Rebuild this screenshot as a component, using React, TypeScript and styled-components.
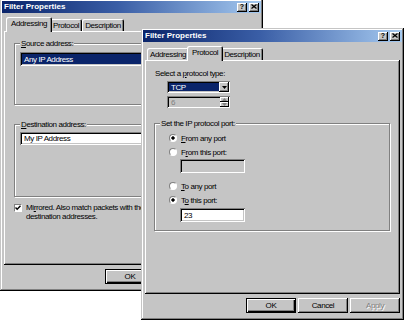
import React from "react";
import styled, { createGlobalStyle } from "styled-components";

const GRAY = "#c5c5c5";
const DARK = "#808080";
const NAVY = "#0a246a";

const GlobalStyle = createGlobalStyle`
  html, body { margin: 0; padding: 0; background: #fff; }
  body {
    font-family: "Liberation Sans", Arial, sans-serif;
    font-size: 8px;
    letter-spacing: -0.4px;
    color: #000;
  }
  * { box-sizing: border-box; }
  u { text-decoration-thickness: 1px; text-underline-offset: 1px; }
`;

const Desktop = styled.div`
  position: relative;
  width: 404px;
  height: 321px;
  overflow: hidden;
  background: #fff;
`;

const Window = styled.div<{ $x: number; $y: number }>`
  position: absolute;
  left: ${(p) => p.$x}px;
  top: ${(p) => p.$y}px;
  width: 263px;
  height: 292px;
  padding: 2px;
  display: flex;
  flex-direction: column;
  background: ${GRAY};
  box-shadow: inset -1px -1px #000, inset 1px 1px ${GRAY}, inset -2px -2px ${DARK},
    inset 2px 2px #fff;
`;

const TitleBar = styled.div`
  flex: none;
  height: 12px;
  display: flex;
  align-items: center;
  justify-content: space-between;
  padding: 0 2px;
  background: linear-gradient(to right, ${NAVY} 0%, #3a5ea6 45%, #a6caf0 100%);
`;

const TitleText = styled.span`
  color: #fff;
  font-weight: bold;
  font-size: 8px;
  letter-spacing: 0;
  line-height: 12px;
  white-space: nowrap;
`;

const TitleButtons = styled.div`
  display: flex;
  gap: 2px;
`;

const TitleButton = styled.div`
  width: 10px;
  height: 9px;
  display: flex;
  align-items: center;
  justify-content: center;
  background: ${GRAY};
  box-shadow: inset -1px -1px #000, inset 1px 1px #fff, inset -2px -2px ${DARK};
  font-size: 7px;
  font-weight: bold;
  letter-spacing: 0;
  line-height: 9px;
  padding-bottom: 1px;
`;

const Body = styled.div`
  flex: 1;
  display: flex;
  flex-direction: column;
  padding: 4px 2px 0 2px;
`;

const TabRow = styled.div`
  position: relative;
  z-index: 1;
  display: flex;
  align-items: flex-end;
  height: 14px;
  padding-left: 2px;
`;

const Tab = styled.div<{ $active?: boolean }>`
  position: relative;
  z-index: ${(p) => (p.$active ? 2 : 1)};
  flex: none;
  height: ${(p) => (p.$active ? 15 : 12)}px;
  margin: 0 ${(p) => (p.$active ? -2 : 0)}px ${(p) => (p.$active ? -1 : 0)}px;
  padding: 0 ${(p) => (p.$active ? 5 : 3)}px ${(p) => (p.$active ? 2 : 0)}px;
  display: flex;
  align-items: center;
  white-space: nowrap;
  background: ${GRAY};
  border-radius: 2px 2px 0 0;
  box-shadow: inset 1px 1px #fff, inset -1px 0 #000, inset -2px 0 ${DARK};
  &:first-child {
    margin-left: 0;
  }
`;

const Panel = styled.div`
  flex: none;
  height: 234px;
  display: flex;
  flex-direction: column;
  box-shadow: inset -1px -1px #000, inset 1px 1px #fff, inset -2px -2px ${DARK};
`;

const GroupBox = styled.div<{ $mt: number; $h: number; $ml: number }>`
  position: relative;
  flex: none;
  height: ${(p) => p.$h}px;
  margin: ${(p) => p.$mt}px 10px 0 ${(p) => p.$ml}px;
  display: flex;
  flex-direction: column;
  border: 1px solid ${DARK};
  box-shadow: inset 1px 1px #fff, 1px 1px #fff;
`;

const GroupLabel = styled.span`
  position: absolute;
  top: -5px;
  left: 5px;
  padding: 0 1px;
  line-height: 9px;
  background: ${GRAY};
  white-space: nowrap;
`;

const Field = styled.div<{
  $mt: number;
  $ml: number;
  $w?: number;
  $h: number;
  $disabled?: boolean;
}>`
  flex: none;
  display: flex;
  align-items: center;
  width: ${(p) => (p.$w ? `${p.$w}px` : "auto")};
  height: ${(p) => p.$h}px;
  margin: ${(p) => p.$mt}px 6px 0 ${(p) => p.$ml}px;
  padding: 2px;
  background: ${(p) => (p.$disabled ? GRAY : "#fff")};
  color: ${(p) => (p.$disabled ? DARK : "#000")};
  box-shadow: inset 1px 1px ${DARK}, inset -1px -1px #fff, inset 2px 2px #000,
    inset -2px -2px ${GRAY};
  white-space: nowrap;
`;

const FieldText = styled.span`
  flex: 1;
  padding-left: 2px;
  line-height: 9px;
`;

const Selection = styled.span`
  flex: 1;
  align-self: stretch;
  display: flex;
  align-items: center;
  padding-left: 2px;
  background: ${NAVY};
  color: #fff;
`;

const DropButton = styled.div`
  flex: none;
  width: 10px;
  align-self: stretch;
  margin: -1px -1px -1px 0;
  display: flex;
  align-items: center;
  justify-content: center;
  background: ${GRAY};
  box-shadow: inset -1px -1px #000, inset 1px 1px #fff, inset -2px -2px ${DARK};
`;

const SpinColumn = styled.div`
  flex: none;
  width: 9px;
  align-self: stretch;
  margin: -1px -1px -1px 0;
  display: flex;
  flex-direction: column;
`;

const SpinButton = styled.div`
  flex: 1;
  display: flex;
  align-items: center;
  justify-content: center;
  background: ${GRAY};
  box-shadow: inset -1px -1px #000, inset 1px 1px #fff;
`;

const Prompt = styled.div`
  margin: 9px 0 0 10px;
  line-height: 9px;
  white-space: nowrap;
`;

const RadioRow = styled.div<{ $mt: number }>`
  flex: none;
  display: flex;
  align-items: center;
  gap: 4px;
  height: 10px;
  margin-top: ${(p) => p.$mt}px;
  padding-left: 14px;
  white-space: nowrap;
`;

const RadioDot = styled.span<{ $checked?: boolean }>`
  flex: none;
  width: 8px;
  height: 8px;
  border-radius: 50%;
  border: 1px solid;
  border-color: ${DARK} #fff #fff ${DARK};
  background: ${(p) =>
    p.$checked
      ? "radial-gradient(circle, #000 0 1.4px, #fff 1.9px)"
      : "#fff"};
`;

const CheckRow = styled.div`
  display: flex;
  align-items: flex-start;
  gap: 4px;
  margin: 6px 0 0 10px;
`;

const CheckBox = styled.span`
  flex: none;
  width: 8px;
  height: 8px;
  margin-top: 1px;
  display: flex;
  align-items: center;
  justify-content: center;
  background: #fff;
  border: 1px solid;
  border-color: ${DARK} #fff #fff ${DARK};
`;

const CheckText = styled.div`
  line-height: 9px;
  white-space: nowrap;
`;

const ButtonRow = styled.div`
  display: flex;
  justify-content: flex-end;
  gap: 2px;
  margin-top: 4px;
`;

const DialogButton = styled.div<{ $default?: boolean; $disabled?: boolean }>`
  width: 50px;
  height: 15px;
  display: flex;
  align-items: center;
  justify-content: center;
  background: ${GRAY};
  color: ${(p) => (p.$disabled ? DARK : "#000")};
  text-shadow: ${(p) => (p.$disabled ? "1px 1px #fff" : "none")};
  box-shadow: ${(p) =>
    p.$default
      ? `inset 0 0 0 1px #000, inset 2px 2px #fff, inset -2px -2px #000, inset -3px -3px ${DARK}`
      : `inset -1px -1px #000, inset 1px 1px #fff, inset -2px -2px ${DARK}`};
`;

const CloseIcon = () => (
  <svg width="6" height="5" viewBox="0 0 6 5">
    <path d="M0.5 0.5 L5.5 4.5 M5.5 0.5 L0.5 4.5" stroke="#000" strokeWidth="1.3" />
  </svg>
);

const Tri = ({ up, color = "#000" }: { up?: boolean; color?: string }) => (
  <svg width="5" height="3" viewBox="0 0 5 3">
    <path d={up ? "M0 3 L5 3 L2.5 0 Z" : "M0 0 L5 0 L2.5 3 Z"} fill={color} />
  </svg>
);

const CheckMark = () => (
  <svg width="6" height="6" viewBox="0 0 6 6">
    <path d="M0.5 2.5 L2.2 4.3 L5.5 0.8" stroke="#000" strokeWidth="1.4" fill="none" />
  </svg>
);

const Caption = () => (
  <TitleBar>
    <TitleText>Filter Properties</TitleText>
    <TitleButtons>
      <TitleButton>?</TitleButton>
      <TitleButton>
        <CloseIcon />
      </TitleButton>
    </TitleButtons>
  </TitleBar>
);

const Buttons = () => (
  <ButtonRow>
    <DialogButton $default>OK</DialogButton>
    <DialogButton>Cancel</DialogButton>
    <DialogButton $disabled>Apply</DialogButton>
  </ButtonRow>
);

export default function App() {
  return (
    <>
      <GlobalStyle />
      <Desktop>
        <Window $x={0} $y={-1}>
          <Caption />
          <Body>
            <TabRow>
              <Tab $active>Addressing</Tab>
              <Tab>Protocol</Tab>
              <Tab>Description</Tab>
            </TabRow>
            <Panel>
              <GroupBox $mt={12} $h={62} $ml={10}>
                <GroupLabel>
                  <u>S</u>ource address:
                </GroupLabel>
                <Field $mt={8} $ml={5} $h={14}>
                  <Selection>Any IP Address</Selection>
                </Field>
              </GroupBox>
              <GroupBox $mt={19} $h={73} $ml={10}>
                <GroupLabel>
                  <u>D</u>estination address:
                </GroupLabel>
                <Field $mt={7} $ml={5} $h={13}>
                  <FieldText>My IP Address</FieldText>
                </Field>
              </GroupBox>
              <CheckRow>
                <CheckBox>
                  <CheckMark />
                </CheckBox>
                <CheckText>
                  Mi<u>r</u>rored. Also match packets with the exact opposite source and
                  <br />
                  destination addresses.
                </CheckText>
              </CheckRow>
            </Panel>
            <Buttons />
          </Body>
        </Window>

        <Window $x={141} $y={28}>
          <Caption />
          <Body>
            <TabRow>
              <Tab>Addressing</Tab>
              <Tab $active>Protocol</Tab>
              <Tab>Description</Tab>
            </TabRow>
            <Panel>
              <Prompt>
                Select a <u>p</u>rotocol type:
              </Prompt>
              <Field $mt={3} $ml={22} $w={63} $h={12}>
                <Selection>TCP</Selection>
                <DropButton>
                  <Tri />
                </DropButton>
              </Field>
              <Field $mt={3} $ml={22} $w={63} $h={12} $disabled>
                <FieldText>6</FieldText>
                <SpinColumn>
                  <SpinButton>
                    <Tri up color={DARK} />
                  </SpinButton>
                  <SpinButton>
                    <Tri color={DARK} />
                  </SpinButton>
                </SpinColumn>
              </Field>
              <GroupBox $mt={15} $h={108} $ml={9}>
                <GroupLabel>Set the IP protocol port:</GroupLabel>
                <RadioRow $mt={9}>
                  <RadioDot $checked />
                  <span>
                    <u>F</u>rom any port
                  </span>
                </RadioRow>
                <RadioRow $mt={4}>
                  <RadioDot />
                  <span>
                    F<u>r</u>om this port:
                  </span>
                </RadioRow>
                <Field $mt={2} $ml={25} $w={65} $h={14} $disabled />
                <RadioRow $mt={8}>
                  <RadioDot />
                  <span>
                    <u>T</u>o any port
                  </span>
                </RadioRow>
                <RadioRow $mt={4}>
                  <RadioDot $checked />
                  <span>
                    T<u>o</u> this port:
                  </span>
                </RadioRow>
                <Field $mt={3} $ml={25} $w={65} $h={14}>
                  <FieldText>23</FieldText>
                </Field>
              </GroupBox>
            </Panel>
            <Buttons />
          </Body>
        </Window>
      </Desktop>
    </>
  );
}
